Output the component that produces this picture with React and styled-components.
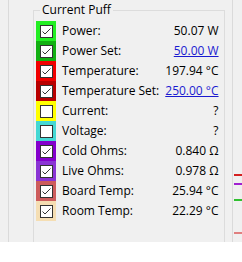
import React from "react";
import styled, { createGlobalStyle } from "styled-components";

const Global = createGlobalStyle`
  html, body { margin: 0; padding: 0; background: #ffffff; }
  body { font-family: "Open Sans", "Noto Sans", sans-serif; }
`;

const Screen = styled.div`
  width: 242px;
  height: 262px;
  background: #ffffff;
  display: flex;
  flex-direction: column;
`;

const Panel = styled.div`
  height: 242px;
  background: #f0f0f0;
  display: flex;
  overflow: hidden;
`;

const Gutter = styled.div`
  width: 8px;
  flex: none;
  border-right: 1px solid #dadada;
`;

const Main = styled.div`
  flex: none;
  width: 192px;
  margin-left: 24px;
  margin-right: 7px;
`;

const GroupBox = styled.fieldset`
  margin: 3px 0 0 0;
  padding: 4px 8px 0 2px;
  height: 260px;
  box-sizing: border-box;
  border: 1px solid #dcdcdc;
  min-width: 0;
`;

const Legend = styled.legend`
  margin-left: 4px;
  padding: 0 2px;
  font-size: 12px;
  line-height: 14px;
  color: #000;
`;

const Rows = styled.div`
  display: grid;
  grid-template-columns: 20px 1fr auto;
  grid-auto-rows: 20px;
  column-gap: 6px;
  align-items: center;
  font-size: 12px;
  color: #000;
`;

const Swatch = styled.div`
  width: 20px;
  height: 20px;
  background: ${(p) => p.$color};
  display: flex;
  align-items: center;
  justify-content: center;
`;

const Label = styled.span`
  white-space: nowrap;
  line-height: 20px;
`;

const Value = styled.span`
  white-space: nowrap;
  text-align: right;
  line-height: 20px;
  color: ${(p) => (p.$link ? "#1a1ad0" : "#000")};
  text-decoration: ${(p) => (p.$link ? "underline" : "none")};
`;

const Side = styled.div`
  flex: 1;
  border-left: 1px solid #dadada;
`;

const Check = ({ checked }) => (
  <svg width="13" height="13" viewBox="0 0 13 13">
    <rect x="0.5" y="0.5" width="12" height="12" fill="#fff" stroke="#333" />
    {checked && (
      <polyline
        points="2.5,6.5 5,9 10.5,3.5"
        fill="none"
        stroke="#333"
        strokeWidth="1"
      />
    )}
  </svg>
);

const rows = [
  { label: "Power:", value: "50.07 W", color: "#22ee22", checked: true },
  { label: "Power Set:", value: "50.00 W", color: "#12b012", checked: true, link: true },
  { label: "Temperature:", value: "197.94 °C", color: "#f00000", checked: true },
  { label: "Temperature Set:", value: "250.00 °C", color: "#b80000", checked: true, link: true },
  { label: "Current:", value: "?", color: "#ffff00", checked: false },
  { label: "Voltage:", value: "?", color: "#44d8d4", checked: false },
  { label: "Cold Ohms:", value: "0.840 Ω", color: "#8400cc", checked: true },
  { label: "Live Ohms:", value: "0.978 Ω", color: "#8a34d4", checked: true },
  { label: "Board Temp:", value: "25.94 °C", color: "#cd5c5c", checked: true },
  { label: "Room Temp:", value: "22.29 °C", color: "#f5deb3", checked: true },
];

const ChartMarks = () => (
  <svg width="9" height="242" viewBox="0 0 9 242">
    <rect x="1" y="174" width="8" height="2" fill="#d42020" />
    <rect x="1" y="183" width="8" height="2" fill="#a020d0" />
    <rect x="1" y="199" width="8" height="2" fill="#30c030" />
    <rect x="1" y="232" width="8" height="2" fill="#e08080" />
  </svg>
);

export default function App() {
  return (
    <>
      <Global />
      <Screen>
        <Panel>
          <Gutter />
          <Main>
            <GroupBox>
              <Legend>Current Puff</Legend>
              <Rows>
                {rows.map((r) => (
                  <React.Fragment key={r.label}>
                    <Swatch $color={r.color}>
                      <Check checked={r.checked} />
                    </Swatch>
                    <Label>{r.label}</Label>
                    <Value $link={r.link}>{r.value}</Value>
                  </React.Fragment>
                ))}
              </Rows>
            </GroupBox>
          </Main>
          <Side>
            <ChartMarks />
          </Side>
        </Panel>
      </Screen>
    </>
  );
}
